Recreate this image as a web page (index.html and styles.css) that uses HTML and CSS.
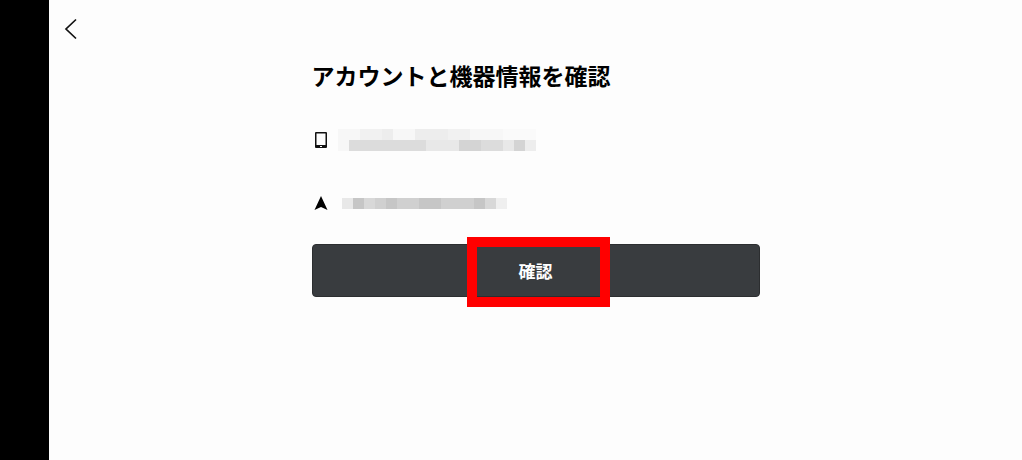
FILE: index.html
```html
<!DOCTYPE html>
<html lang="ja">
  <head>
    <meta charset="UTF-8" />
    <meta name="viewport" content="width=device-width, initial-scale=1.0" />
    <title>アカウントと機器情報を確認</title>
    <link rel="stylesheet" href="styles.css">
  </head>
  <body>
    <main class="screen">
      <header>
        <button type="button" class="back" aria-label="戻る">
          <svg width="14" height="22" viewBox="0 0 14 22">
            <path d="M12 1.5L2 11L12 20.5" fill="none" stroke="#111" stroke-width="1.7" />
          </svg>
        </button>
      </header>

      <section class="confirm">
        <h1>アカウントと機器情報を確認</h1>

        <div class="info">
          <svg class="icon" width="18" height="18" viewBox="0 0 18 18">
            <path fill="#111" fill-rule="evenodd" d="M4 1h10a1 1 0 0 1 1 1v14a1 1 0 0 1-1 1H4a1 1 0 0 1-1-1V2a1 1 0 0 1 1-1zM4.500 2.500v11.500h9V2.500zM8 15v1h2v-1z" />
          </svg>
          <svg class="masked" width="198" height="22" viewBox="0 0 18 2" shape-rendering="crispEdges">
            <path fill="#f7f7f7" d="M0 0h2v1H0zM0 1h1v1H0zM5 0h2v1H5zM12 0h3v1h-3z" />
            <path fill="#f1f1f1" d="M2 0h3v1H2zM10 0h2v1h-2z" />
            <path fill="#ededed" d="M4 0h1v1H4zM7 0h3v1H7zM17 1h1v1h-1z" />
            <path fill="#fafafa" d="M15 0h3v1h-3z" />
            <path fill="#dcdcdc" d="M1 1h7v1H1zM13 1h2v1h-2z" />
            <path fill="#e8e8e8" d="M8 1h3v1H8zM15 1h1v1h-1z" />
            <path fill="#d4d4d4" d="M11 1h2v1h-2zM16 1h1v1h-1z" />
          </svg>
        </div>

        <div class="info">
          <svg class="icon" width="18" height="18" viewBox="0 0 18 18">
            <path d="M9 2L15.500 16L9 13L2.500 16z" />
          </svg>
          <svg class="masked second" width="165" height="11" viewBox="0 0 15 1" shape-rendering="crispEdges">
            <path fill="#d0d0d0" d="M0 0h13v1H0z" />
            <path fill="#e8e8e8" d="M0 0h1v1H0z" />
            <path fill="#c6c6c6" d="M1 0h1v1H1zM4 0h1v1H4zM7 0h2v1H7zM12 0h1v1h-1z" />
            <path fill="#d8d8d8" d="M2 0h1v1H2zM13 0h1v1h-1z" />
            <path fill="#efefef" d="M14 0h1v1h-1z" />
          </svg>
        </div>

        <button type="button" class="submit">確認<span class="mark"></span></button>
      </section>
    </main>
  </body>
</html>
```

FILE: styles.css
```css
* {
  box-sizing: border-box;
}

body {
  margin: 0;
  min-height: 100vh;
  border-left: 49px solid #000;
  background-color: #fdfdfd;
  color: #000;
  font-family: "Noto Sans CJK JP", sans-serif;
}

header {
  display: flex;
  padding: 18px 15px;
}

button {
  border: none;
  font-family: inherit;
  cursor: pointer;
}

.back {
  padding: 0;
  background: none;
}

svg {
  display: block;
}

.confirm {
  max-width: 448px;
  margin: 0 auto;
}

h1 {
  margin: 0 0 31px;
  font-size: 23px;
  line-height: 34px;
  font-weight: bold;
  white-space: nowrap;
}

.info {
  display: flex;
  align-items: center;
  gap: 8px;
  height: 34px;
  margin-bottom: 29px;
}

.second {
  margin-left: 4px;
}

.submit {
  position: relative;
  display: block;
  width: 100%;
  height: 53px;
  margin-top: -5px;
  border-radius: 4px;
  border: 1px solid #2c2e30;
  background-color: #393c3f;
  color: #fff;
  font-size: 17px;
  font-weight: bold;
}

/* red frame lying over the middle of the button */
.mark {
  position: absolute;
  top: -8px;
  bottom: -11px;
  left: calc(50% - 69px);
  width: 143px;
  border: 10px solid #f00;
}
```
